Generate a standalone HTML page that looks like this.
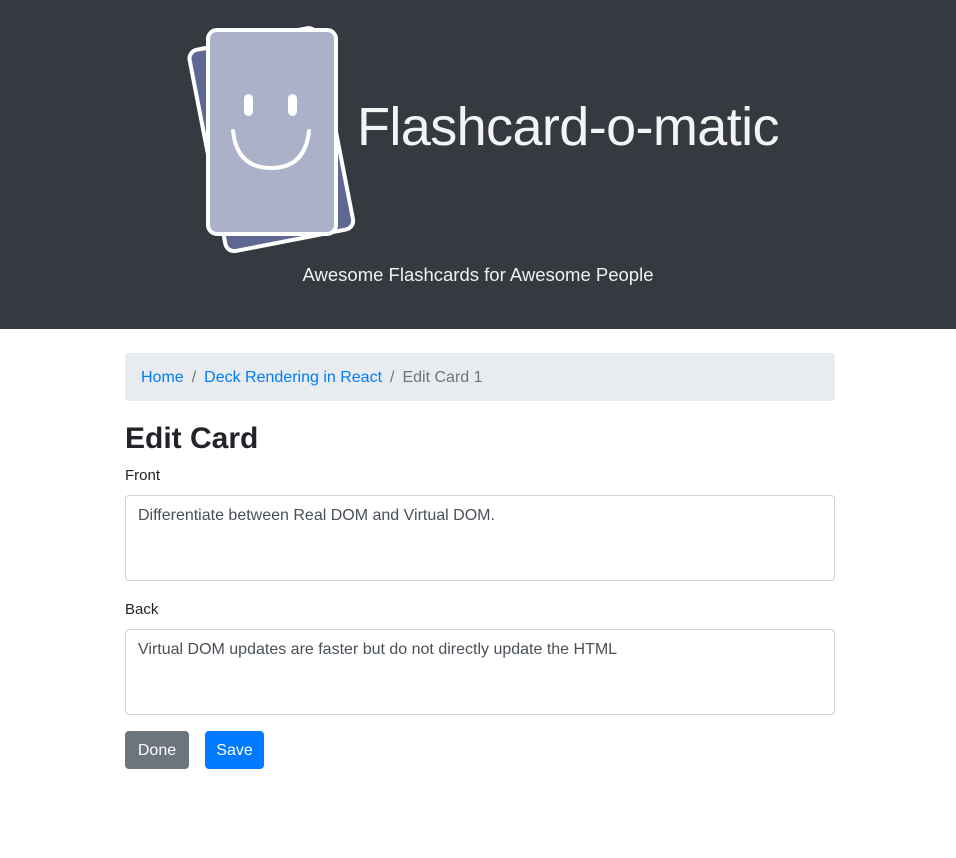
<!DOCTYPE html>
<html><head><style>
body{margin:0;font-family:"Liberation Sans",sans-serif;color:#212529;background:#fff;font-size:16px}
.hdr{height:329px;background:#343a40;position:relative;color:#fff}
.title{position:absolute;left:357px;top:96px;font-size:54px;font-weight:300;letter-spacing:-0.6px;color:#f4f4f4}
.sub{position:absolute;left:0;right:0;top:264px;text-align:center;font-size:18.5px;color:#f0f0f0}
.c{position:absolute;left:125px;width:710px}
.bc{top:353px;height:48px;background:#e9ecef;border-radius:4px;line-height:50px;padding-left:16px;box-sizing:border-box;font-size:16px;color:#6c757d}
.bc a{color:#007bff;text-decoration:none}
.bc span{padding:0 8px}
h1{position:absolute;left:125px;top:420px;margin:0;font-size:30px;font-weight:bold;line-height:38px}
label{position:absolute;left:125px;font-size:15px}
.ta{position:absolute;left:125px;width:710px;height:86px;box-sizing:border-box;border:1px solid #ced4da;border-radius:4px;padding:8px 12px;color:#495057;font-size:16px;line-height:24px}
.btn{position:absolute;top:731px;height:38px;line-height:40px;color:#fff;border-radius:4px;font-size:16px;text-align:center}
</style></head><body>
<div class="hdr">
<svg width="200" height="260" style="position:absolute;left:175px;top:10px;overflow:visible" viewBox="0 0 200 260">
<g transform="rotate(-11 97 128)"><rect x="31" y="27" width="130" height="205" rx="9" fill="#5f6892" stroke="#fff" stroke-width="4"/></g>
<rect x="33" y="20" width="128" height="204" rx="9" fill="#abb1c9" stroke="#fff" stroke-width="4"/>
<rect x="69" y="84" width="9" height="22" rx="4.5" fill="#fff"/>
<rect x="113" y="84" width="9" height="22" rx="4.5" fill="#fff"/>
<path d="M58 121 Q62 158 96 158 Q130 158 134 121" fill="none" stroke="#fff" stroke-width="4" stroke-linecap="round"/>
</svg>
<div class="title">Flashcard-o-matic</div>
<div class="sub">Awesome Flashcards for Awesome People</div>
</div>
<div class="c bc"><a>Home</a><span>/</span><a>Deck Rendering in React</a><span>/</span>Edit Card 1</div>
<h1>Edit Card</h1>
<label style="top:467px">Front</label>
<div class="ta" style="top:495px">Differentiate between Real DOM and Virtual DOM.</div>
<label style="top:601px">Back</label>
<div class="ta" style="top:629px">Virtual DOM updates are faster but do not directly update the HTML</div>
<div class="btn" style="left:125px;width:64px;background:#6c757d">Done</div>
<div class="btn" style="left:205px;width:59px;background:#007bff">Save</div>
</body></html>
